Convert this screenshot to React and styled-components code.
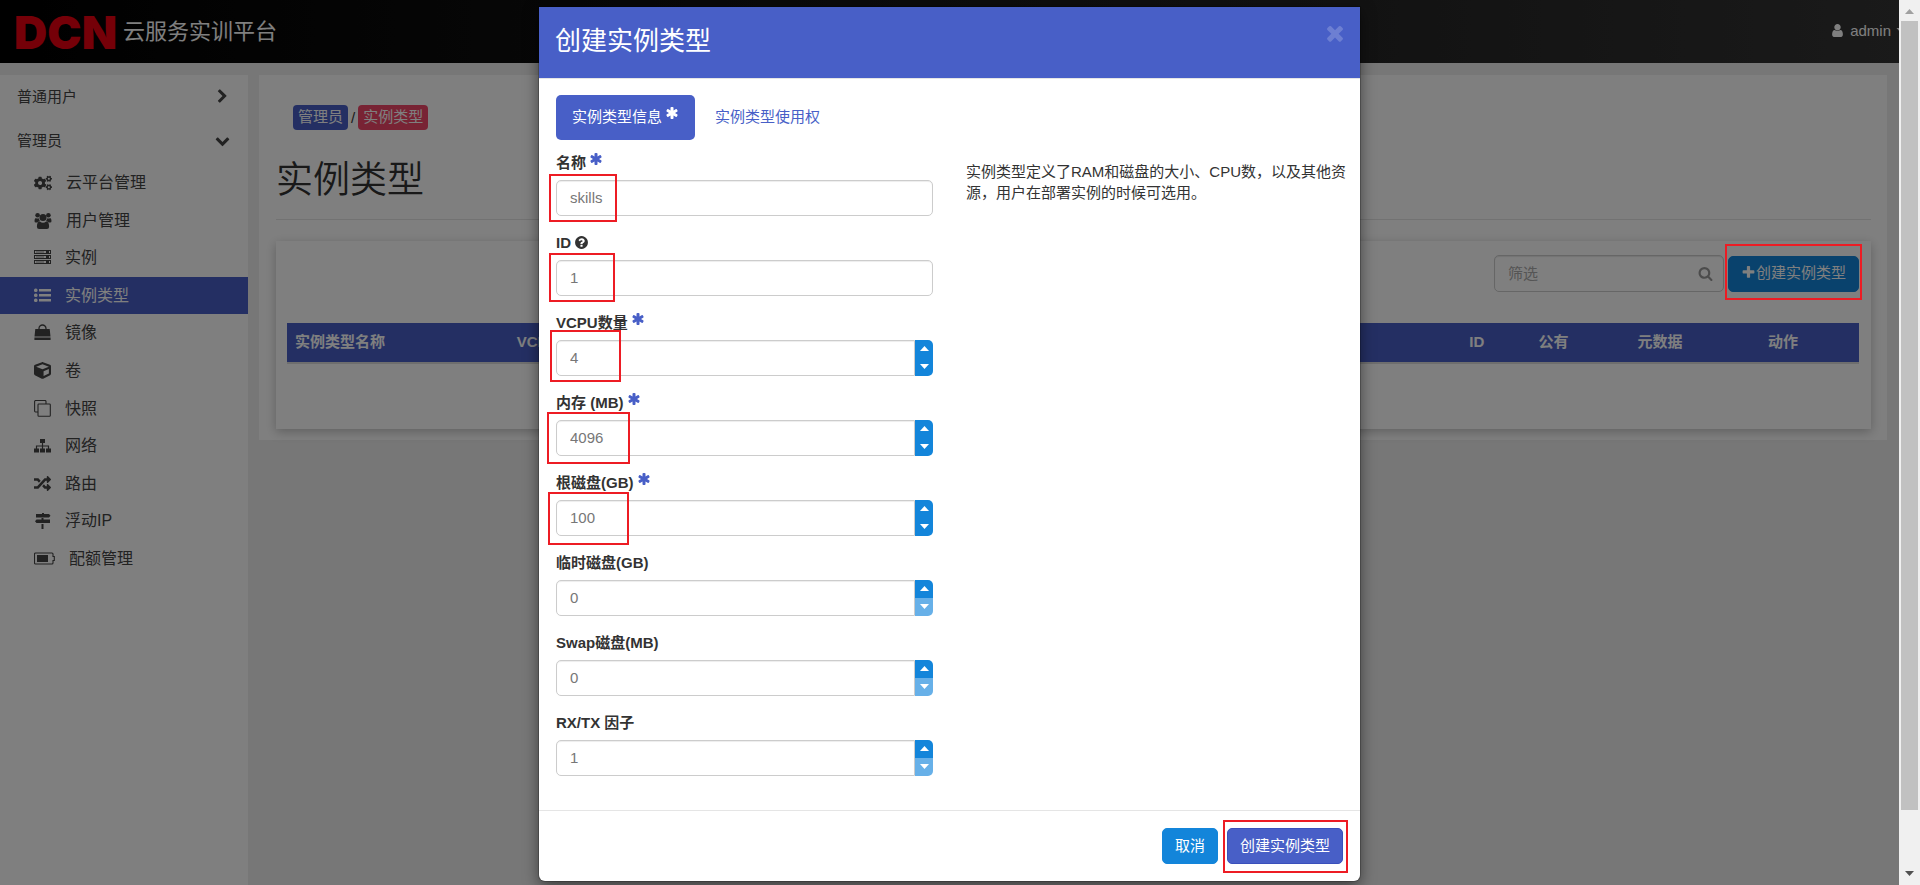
import React from "react";
import styled, { createGlobalStyle, css } from "styled-components";
import { FaCogs, FaRandom, FaCube } from "react-icons/fa";

const GlobalStyle = createGlobalStyle`
  *, *::before, *::after { box-sizing: border-box; }
  body {
    margin: 0;
    font-family: "Liberation Sans", "Noto Sans CJK SC", sans-serif;
    font-size: 15px;
    line-height: 21px;
    color: #333;
    background: #eee;
  }
  h1, h2, p, ul { margin: 0; padding: 0; font-weight: 400; }
  ul { list-style: none; }
  a { color: inherit; text-decoration: none; }
  button, input { font: inherit; }
  button { cursor: pointer; }
  svg { display: block; flex: none; }
`;

/* ---------- icons ---------- */

const glyphs = {
  asterisk:
    "M1546 1050q46 26 59.5 77.5t-12.5 97.5l-64 110q-26 46-77.5 59.5t-97.5-12.5l-266-153v307q0 52-38 90t-90 38h-128q-52 0-90-38t-38-90v-307l-266 153q-46 26-97.5 12.5t-77.5-59.5l-64-110q-26-46-12.5-97.5t59.5-77.5l266-154-266-154q-46-26-59.5-77.5t12.5-97.5l64-110q26-46 77.5-59.5t97.5 12.5l266 153v-307q0-52 38-90t90-38h128q52 0 90 38t38 90v307l266-153q46-26 97.5-12.5t77.5 59.5l64 110q26 46 12.5 97.5t-59.5 77.5l-266 154z",
  plus:
    "M1600 736v192q0 40-28 68t-68 28h-416v416q0 40-28 68t-68 28h-192q-40 0-68-28t-28-68v-416h-416q-40 0-68-28t-28-68v-192q0-40 28-68t68-28h416v-416q0-40 28-68t68-28h192q40 0 68 28t28 68v416h416q40 0 68 28t28 68z",
  search:
    "M1216 832q0-185-131.5-316.5t-316.5-131.5-316.5 131.5-131.5 316.5 131.5 316.5 316.5 131.5 316.5-131.5 131.5-316.5zm512 832q0 52-38 90t-90 38q-54 0-90-38l-343-342q-179 124-399 124-143 0-273.5-55.5t-225-150-150-225-55.5-273.5 55.5-273.5 150-225 225-150 273.5-55.5 273.5 55.5 225 150 150 225 55.5 273.5q0 220-124 399l343 343q37 37 37 90z",
  user:
    "M1536 1399q0 109-62.5 187t-150.5 78h-854q-88 0-150.5-78t-62.5-187q0-85 8.5-160.5t31.5-152 58.5-131 94-89 134.5-34.5q131 128 313 128t313-128q76 0 134.5 34.5t94 89 58.5 131 31.5 152 8.5 160.5zm-256-887q0 159-112.5 271.5t-271.5 112.5-271.5-112.5-112.5-271.5 112.5-271.5 271.5-112.5 271.5 112.5 112.5 271.5z",
  times:
    "M1490 1322q0 40-28 68l-136 136q-28 28-68 28t-68-28l-294-294-294 294q-28 28-68 28t-68-28l-136-136q-28-28-28-68t28-68l294-294-294-294q-28-28-28-68t28-68l136-136q28-28 68-28t68 28l294 294 294-294q28-28 68-28t68 28l136 136q28 28 28 68t-28 68l-294 294 294 294q28 28 28 68z",
  chevronRight:
    "M1363 877l-742 742q-19 19-45 19t-45-19l-166-166q-19-19-19-45t19-45l531-531-531-531q-19-19-19-45t19-45l166-166q19-19 45-19t45 19l742 742q19 19 19 45t-19 45z",
  chevronDown:
    "M1683 808l-742 741q-19 19-45 19t-45-19l-742-741q-19-19-19-45.5t19-45.5l166-165q19-19 45-19t45 19l531 531 531-531q19-19 45-19t45 19l166 165q19 19 19 45.5t-19 45.5z",
  question:
    "M1024 1376v-192q0-14-9-23t-23-9h-192q-14 0-23 9t-9 23v192q0 14 9 23t23 9h192q14 0 23-9t9-23zm256-672q0-88-55.5-163t-138.5-116-170-41q-243 0-371 213-15 24 8 42l132 100q7 6 19 6 16 0 25-12 53-68 86-92 34-24 86-24 48 0 85.5 26t37.5 59q0 38-20 61t-68 45q-63 28-115.5 86.5t-52.5 125.5v36q0 14 9 23t23 9h192q14 0 23-9t9-23q0-19 21.5-49.5t54.5-49.5q32-18 49-28.5t46-35 44.5-48 28-60.5 12.5-81zm384 192q0 209-103 385.5t-279.5 279.5-385.5 103-385.5-103-279.5-279.5-103-385.5 103-385.5 279.5-279.5 385.5-103 385.5 103 279.5 279.5 103 385.5z",
};

const Glyph = ({ name, size = 15 }) => (
  <svg width={size} height={size} viewBox="0 0 1792 1792" fill="currentColor" aria-hidden="true">
    <path d={glyphs[name]} />
  </svg>
);

const Svg17 = ({ children, width = 17 }) => (
  <svg width={width} height="17" viewBox={`0 0 ${width} 17`} fill="currentColor" aria-hidden="true">
    {children}
  </svg>
);

const UsersIcon = () => (
  <Svg17 width={18}>
    <circle cx="3.600" cy="3.200" r="2.300" />
    <circle cx="14.400" cy="3.200" r="2.300" />
    <circle cx="9" cy="5.500" r="3.500" />
    <path d="M1.800 6q1.700 1 3.300.2Q5 8 6 9.100 4.300 9.200 3.400 10.500H1.800Q.5 10.500.5 9q0-2.500 1.300-3zM16.200 6q-1.700 1-3.300.2Q13 8 12 9.100q1.700.1 2.600 1.400h1.600q1.300 0 1.300-1.500 0-2.500-1.300-3zM5.900 9.500Q7.300 10.700 9 10.700t3.100-1.200q3 0 3 5.200 0 2.300-2.200 2.300H5.100q-2.200 0-2.200-2.300 0-5.200 3-5.200z" />
  </Svg17>
);

const ServerIcon = () => (
  <Svg17>
    {[2, 7, 12].map((y) => (
      <g key={y}>
        <rect x="0.5" y={y - 0.5} width="16" height="3" fill="none" stroke="currentColor" />
        <rect x="2" y={y + 0.5} width="8" height="1" opacity="0.6" />
        <rect x="12" y={y} width="3" height="2" />
      </g>
    ))}
  </Svg17>
);

const ListIcon = () => (
  <Svg17>
    {[2, 7, 12].map((y) => (
      <g key={y}>
        <rect x="0" y={y - 0.5} width="3.5" height="3.5" rx="1.5" />
        <rect x="5" y={y} width="12" height="2.5" />
      </g>
    ))}
  </Svg17>
);

const BagIcon = () => (
  <Svg17>
    <path d="M5 7V4.5a3.5 3.5 0 0 1 7 0V7" fill="none" stroke="currentColor" strokeWidth="1.3" />
    <path d="M1.3 5h14.4l.8 7.6H.5zM.4 13.6h16.2V16H.4z" />
  </Svg17>
);

const CloneIcon = () => (
  <Svg17>
    <g fill="none" stroke="currentColor" strokeWidth="1.1">
      <path d="M4 12H1.5A1 1 0 0 1 .6 11V1.5a1 1 0 0 1 1-1H11a1 1 0 0 1 1 1V4" />
      <rect x="4" y="4" width="12.3" height="12.3" rx="0.8" />
    </g>
  </Svg17>
);

const SitemapIcon = () => (
  <Svg17>
    <path d="M6 2h5v4H6zM0 11.500h5v4H0zM6 11.500h5v4H6zM12 11.500h5v4h-5z" />
    <path d="M8.500 6v6M2.500 12V9h12v3" fill="none" stroke="currentColor" strokeWidth="1.2" />
  </Svg17>
);

const SignsIcon = () => (
  <Svg17>
    <path d="M8 1h2v1h5l1.500 1.800L15 5.600H2V2h6zM7.500 6h2v1.500H16v3.600H2.500L1 9.300l1.500-1.800h5zM7.500 12h2v5h-2z" />
  </Svg17>
);

const BatteryIcon = () => (
  <Svg17 width={21}>
    <path d="M1.500 3h16.500q1 0 1 1v2.500h1.300v4H19V13q0 1-1 1H1.500q-1 0-1-1V4q0-1 1-1z" fill="none" stroke="currentColor" strokeWidth="1.100" />
    <rect x="3" y="5" width="11" height="7" />
  </Svg17>
);

const Triangle = ({ down, width = 9, height = 5 }) => (
  <svg width={width} height={height} viewBox="0 0 9 5" fill="currentColor" aria-hidden="true">
    <path d={down ? "M0 0h9L4.500 5z" : "M0 5h9L4.500 0z"} />
  </svg>
);

/* ---------- page ---------- */

const Viewport = styled.div`
  display: flex;
  height: 100vh;
  overflow: hidden;
`;

const Page = styled.div`
  position: relative;
  flex: 1;
  min-width: 0;
  overflow: hidden;
`;

const TopBar = styled.header`
  display: flex;
  align-items: center;
  justify-content: space-between;
  height: 63px;
  padding-left: 14px;
  color: #fff;
  background: linear-gradient(90deg, #000 0%, #0c0c0c 25%, #343434 100%);
`;

const Brand = styled.a`
  display: flex;
  align-items: center;
  gap: 6px;
  font-size: 22px;
  line-height: 30px;
  white-space: nowrap;
`;

const BrandMark = styled.span`
  font-family: Inter, sans-serif;
  font-size: 46px;
  font-weight: 900;
  color: #ea0010;
`;

const UserMenu = styled.button`
  display: flex;
  align-items: center;
  gap: 5px;
  margin-right: -7px;
  padding: 0 0 2px;
  border: 0;
  color: #fff;
  background: none;
`;

const Columns = styled.div`
  display: grid;
  grid-template-columns: 248px 1fr;
  align-items: start;
  gap: 11px;
  padding: 12px 12px 0 0;
`;

const Sidebar = styled.nav`
  min-height: 100vh;
  background: #fff;
`;

const SideGroup = styled.button`
  display: flex;
  align-items: center;
  justify-content: space-between;
  width: 100%;
  height: 44px;
  padding: 0 18px 2px 17px;
  border: 0;
  color: #444;
  background: none;
`;

const SideList = styled.ul`
  display: grid;
  grid-auto-rows: 1fr;
  height: 413px;
  margin-top: 1px;
`;

const SideLink = styled.a`
  display: flex;
  align-items: center;
  gap: 14px;
  height: 100%;
  padding-left: 34px;
  font-size: 16px;
  color: #444;
  ${(p) => p.$active && css`
    color: #fff;
    background: #485fc7;
  `}
`;

const Panel = styled.main`
  min-width: 0;
  padding: 30px 16px 11px 17px;
  background: #fff;
`;

const Breadcrumb = styled.nav`
  display: flex;
  align-items: center;
  gap: 3px;
  padding-left: 17px;
`;

const Crumb = styled.a`
  padding: 1px 5px 3px;
  border-radius: 4px;
  color: #fff;
  background: ${(p) => (p.$current ? "#f14668" : "#485fc7")};
`;

const PageTitle = styled.h1`
  padding: 26px 0 13px;
  border-bottom: 1px solid #e5e5e5;
  font-size: 37px;
  font-weight: 350;
  line-height: 50px;
  color: #333;
`;

const Card = styled.section`
  margin-top: 21px;
  padding: 14px 12px 65px 11px;
  box-shadow: 0 3px 10px rgba(0, 0, 0, 0.25);
`;

const Actions = styled.div`
  display: flex;
  align-items: center;
  justify-content: flex-end;
  gap: 4px;
  margin-bottom: 31px;
`;

const SearchBox = styled.label`
  display: flex;
  align-items: center;
  width: 230px;
  height: 37px;
  padding: 0 10px 0 13px;
  border: 1px solid #ccc;
  border-radius: 5px;
  color: #999;
  box-shadow: inset 0 1px 1px rgba(0, 0, 0, 0.1);
`;

const SearchInput = styled.input`
  flex: 1;
  min-width: 0;
  padding: 0;
  border: 0;
  outline: 0;
  background: none;
  &::placeholder { color: #aaa; }
`;

const Marked = styled.div`
  position: relative;
  display: flex;
`;

const Mark = styled.span`
  position: absolute;
  z-index: 30;
  top: ${(p) => p.$box[1]}px;
  left: ${(p) => p.$box[0]}px;
  width: ${(p) => p.$box[2]}px;
  height: ${(p) => p.$box[3]}px;
  border: 2px solid #ed1c24;
  pointer-events: none;
`;

const Button = styled.button`
  display: flex;
  align-items: center;
  height: 36px;
  padding: 0 12px 2px;
  border: 1px solid ${(p) => (p.$primary ? "#3a50bb" : "#1385da")};
  border-radius: 5px;
  color: #fff;
  background: ${(p) => (p.$primary ? "#485fc7" : "#1385da")};
`;

const Table = styled.table`
  width: 100%;
  table-layout: fixed;
  border-collapse: collapse;
`;

const HeadCell = styled.th`
  width: ${(p) => p.$width};
  height: 40px;
  padding: 0 8px 2px;
  border-bottom: 2px solid #ddd;
  text-align: left;
  white-space: nowrap;
  color: #fff;
  background: #485fc7;
`;

const ScrollTrack = styled.div`
  display: flex;
  flex-direction: column;
  align-items: center;
  width: 21px;
  padding: 9px 2px;
  color: #a0a0a0;
  background: #f0f0f0;
`;

const ScrollThumb = styled.div`
  flex: 0 0 91%;
  width: 17px;
  margin: 7px 0 auto;
  background: #c1c1c1;
`;

const ScrollEnd = styled.div`
  color: #505050;
`;

/* ---------- dialog ---------- */

const Backdrop = styled.div`
  position: absolute;
  inset: 0;
  z-index: 10;
  padding-top: 7px;
  background: rgba(0, 0, 0, 0.5);
`;

const Dialog = styled.form`
  width: 821px;
  max-width: 100%;
  margin: 0 auto;
  border-radius: 0 0 6px 6px;
  background: #fff;
  box-shadow: 0 5px 15px rgba(0, 0, 0, 0.5), 0 0 0 1px rgba(0, 0, 0, 0.2);
`;

const DialogHead = styled.div`
  display: flex;
  align-items: flex-start;
  justify-content: space-between;
  padding: 14px 13px 21px 16px;
  border-bottom: 1px solid #e5e5e5;
  color: #fff;
  background: #485fc7;
`;

const DialogTitle = styled.h2`
  padding-top: 4px;
  font-size: 26px;
  line-height: 32px;
`;

const CloseButton = styled.button`
  padding: 0;
  border: 0;
  color: #fff;
  background: none;
  opacity: 0.2;
`;

const DialogBody = styled.div`
  padding: 16px 10px 19px 17px;
`;

const Tabs = styled.div`
  display: flex;
  gap: 4px;
  margin-bottom: 11px;
`;

const Tab = styled.button`
  display: flex;
  align-items: center;
  gap: 3px;
  height: 45px;
  padding: 0 16px 2px;
  border: 0;
  border-radius: 5px;
  color: ${(p) => (p.$active ? "#fff" : "#485fc7")};
  background: ${(p) => (p.$active ? "#485fc7" : "none")};
`;

const Raised = styled.span`
  padding-bottom: 7px;
  color: ${(p) => (p.$light ? "#fff" : "#485fc7")};
`;

const FormColumns = styled.div`
  display: grid;
  grid-template-columns: 377fr 384fr;
  gap: 33px;
`;

const Help = styled.p`
  padding-top: 10px;
`;

const Field = styled.div`
  margin-bottom: 15px;
`;

const FieldLabel = styled.label`
  display: flex;
  align-items: center;
  gap: 3px;
  height: 22px;
  margin-bottom: 7px;
  font-weight: 700;
`;

const TextInput = styled.input`
  flex: 1;
  min-width: 0;
  height: 36px;
  padding: 0 13px 2px;
  border: 1px solid #ccc;
  border-radius: ${(p) => (p.$joined ? "5px 0 0 5px" : "5px")};
  outline: 0;
  color: #777;
  box-shadow: inset 0 1px 1px rgba(0, 0, 0, 0.075);
`;

const Stepper = styled.div`
  display: flex;
  flex-direction: column;
  width: 18px;
  overflow: hidden;
  border-radius: 0 5px 5px 0;
`;

const StepButton = styled.button`
  display: flex;
  flex: 1;
  align-items: center;
  justify-content: center;
  padding: 0 0 1px;
  border: 0;
  color: #fff;
  background: #1385da;
  &:disabled { background: #67b0e8; }
`;

const DialogFoot = styled.div`
  display: flex;
  justify-content: flex-end;
  gap: 9px;
  padding: 17px;
  border-top: 1px solid #e5e5e5;
`;

const menu = [
  ["云平台管理", <FaCogs size={18} />],
  ["用户管理", <UsersIcon />],
  ["实例", <ServerIcon />],
  ["实例类型", <ListIcon />],
  ["镜像", <BagIcon />],
  ["卷", <FaCube size={17} />],
  ["快照", <CloneIcon />],
  ["网络", <SitemapIcon />],
  ["路由", <FaRandom size={17} />],
  ["浮动IP", <SignsIcon />],
  ["配额管理", <BatteryIcon />],
];

const headings = [
  ["实例类型名称", "14.1%"],
  ["VCPU数量", "60.6%"],
  ["ID", "4.4%"],
  ["公有", "6.3%"],
  ["元数据", "8.3%"],
  ["动作", "auto"],
];

const fields = [
  { id: "name", label: "名称", value: "skills", required: true, mark: [-7, -6, 68, 48] },
  { id: "flavor-id", label: "ID", value: "1", help: true, mark: [-7, -7, 66, 49] },
  { id: "vcpus", label: "VCPU数量", value: "4", required: true, stepper: true, mark: [-6, -10, 71, 52] },
  { id: "memory", label: "内存 (MB)", value: "4096", required: true, stepper: true, mark: [-9, -8, 83, 52] },
  { id: "disk", label: "根磁盘(GB)", value: "100", required: true, stepper: true, mark: [-8, -8, 81, 53] },
  { id: "ephemeral", label: "临时磁盘(GB)", value: "0", stepper: true, atMinimum: true },
  { id: "swap", label: "Swap磁盘(MB)", value: "0", stepper: true, atMinimum: true },
  { id: "rxtx", label: "RX/TX 因子", value: "1", stepper: true, atMinimum: true },
];

const FormField = ({ id, label, value, required, help, stepper, atMinimum, mark }) => (
  <Field>
    <FieldLabel htmlFor={id}>
      {label}
      {required && <Raised><Glyph name="asterisk" size={14} /></Raised>}
      {help && <Glyph name="question" />}
    </FieldLabel>
    <Marked>
      <TextInput id={id} defaultValue={value} $joined={stepper} />
      {stepper && (
        <Stepper>
          <StepButton type="button" aria-label="+"><Triangle /></StepButton>
          <StepButton type="button" aria-label="-" disabled={atMinimum}><Triangle down /></StepButton>
        </Stepper>
      )}
      {mark && <Mark $box={mark} />}
    </Marked>
  </Field>
);

export default function App() {
  return (
    <Viewport>
      <GlobalStyle />
      <Page>
        <TopBar>
          <Brand href="#">
            <BrandMark>DCN</BrandMark>
            云服务实训平台
          </Brand>
          <UserMenu type="button">
            <Glyph name="user" />
            admin
            <Triangle down width={10} />
          </UserMenu>
        </TopBar>
        <Columns>
          <Sidebar>
            <SideGroup type="button">普通用户<Glyph name="chevronRight" /></SideGroup>
            <SideGroup type="button">管理员<Glyph name="chevronDown" /></SideGroup>
            <SideList>
              {menu.map(([text, icon]) => (
                <li key={text}>
                  <SideLink href="#" $active={text === "实例类型"}>{icon}{text}</SideLink>
                </li>
              ))}
            </SideList>
          </Sidebar>
          <Panel>
            <Breadcrumb>
              <Crumb href="#">管理员</Crumb>
              <span>/</span>
              <Crumb href="#" $current>实例类型</Crumb>
            </Breadcrumb>
            <PageTitle>实例类型</PageTitle>
            <Card>
              <Actions>
                <SearchBox>
                  <SearchInput placeholder="筛选" />
                  <Glyph name="search" />
                </SearchBox>
                <Marked>
                  <Button type="button"><Glyph name="plus" />创建实例类型</Button>
                  <Mark $box={[-3, -12, 137, 56]} />
                </Marked>
              </Actions>
              <Table>
                <thead>
                  <tr>
                    {headings.map(([text, width]) => (
                      <HeadCell key={text} $width={width}>{text}</HeadCell>
                    ))}
                  </tr>
                </thead>
              </Table>
            </Card>
          </Panel>
        </Columns>
        <Backdrop>
          <Dialog role="dialog" onSubmit={(e) => e.preventDefault()}>
            <DialogHead>
              <DialogTitle>创建实例类型</DialogTitle>
              <CloseButton type="button" aria-label="×"><Glyph name="times" size={24} /></CloseButton>
            </DialogHead>
            <DialogBody>
              <Tabs>
                <Tab type="button" $active>
                  实例类型信息
                  <Raised $light><Glyph name="asterisk" size={14} /></Raised>
                </Tab>
                <Tab type="button">实例类型使用权</Tab>
              </Tabs>
              <FormColumns>
                <div>
                  {fields.map((field) => <FormField key={field.id} {...field} />)}
                </div>
                <Help>实例类型定义了RAM和磁盘的大小、CPU数，以及其他资源，用户在部署实例的时候可选用。</Help>
              </FormColumns>
            </DialogBody>
            <DialogFoot>
              <Button type="button">取消</Button>
              <Marked>
                <Button type="submit" $primary>创建实例类型</Button>
                <Mark $box={[-4, -8, 125, 53]} />
              </Marked>
            </DialogFoot>
          </Dialog>
        </Backdrop>
      </Page>
      <ScrollTrack>
        <Triangle />
        <ScrollThumb />
        <ScrollEnd><Triangle down /></ScrollEnd>
      </ScrollTrack>
    </Viewport>
  );
}
